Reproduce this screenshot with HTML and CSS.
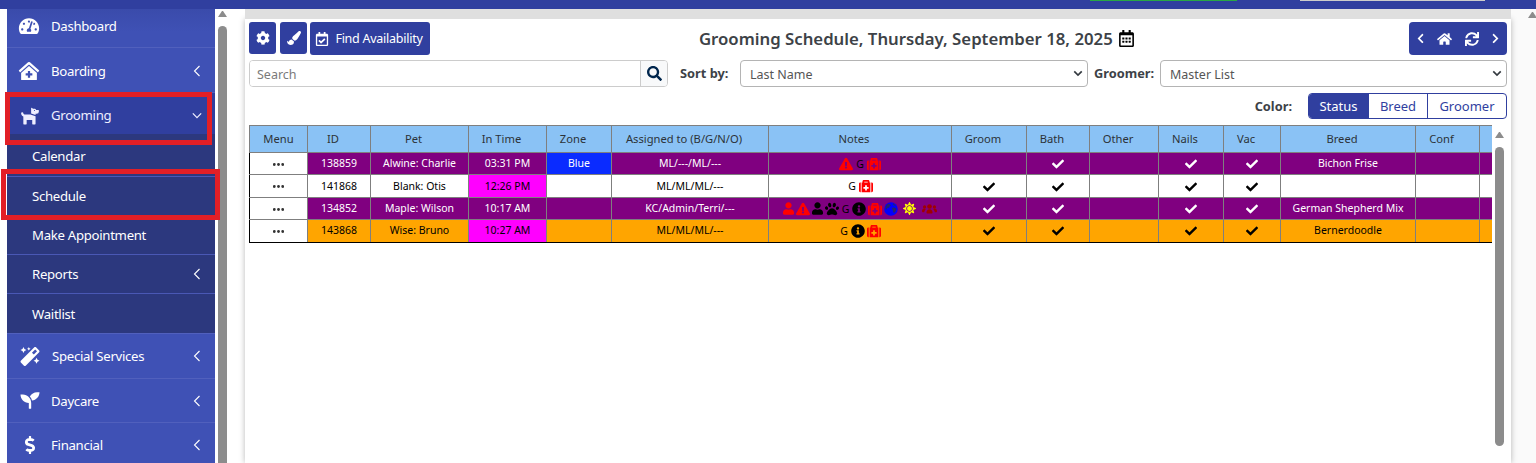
FILE: index.html
```html
<!DOCTYPE html>
<html lang="en">
<head>
<meta charset="utf-8">
<title>Grooming Schedule</title>
<link rel="stylesheet" href="styles.css">
</head>
<body>
<svg class="sprite" aria-hidden="true">
<symbol id="i-check" viewBox="0 0 512 512"><path d="M173.898 439.404l-166.4-166.4c-9.997-9.997-9.997-26.206 0-36.204l36.203-36.204c9.997-9.998 26.207-9.998 36.204 0L192 312.69 432.095 72.596c9.997-9.997 26.207-9.997 36.204 0l36.203 36.204c9.997 9.997 9.997 26.206 0 36.204l-294.4 294.401c-9.998 9.997-26.207 9.997-36.204-.001z"/></symbol>
<symbol id="i-search" viewBox="0 0 512 512"><path d="M505 442.7L405.3 343c-4.5-4.5-10.6-7-17-7H372c27.6-35.3 44-79.7 44-128C416 93.1 322.9 0 208 0S0 93.1 0 208s93.1 208 208 208c48.3 0 92.7-16.4 128-44v16.3c0 6.4 2.5 12.5 7 17l99.7 99.7c9.4 9.4 24.6 9.4 33.9 0l28.3-28.3c9.4-9.4 9.4-24.6.1-34zM208 336c-70.7 0-128-57.2-128-128 0-70.7 57.2-128 128-128 70.7 0 128 57.2 128 128 0 70.7-57.2 128-128 128z"/></symbol>
<symbol id="i-warn" viewBox="0 0 576 512"><path d="M569.517 440.013C587.975 472.007 564.806 512 527.94 512H48.054c-36.937 0-59.999-40.055-41.577-71.987L246.423 23.985c18.467-32.009 64.72-31.951 83.154 0l239.94 416.028zM288 354c-25.405 0-46 20.595-46 46s20.595 46 46 46 46-20.595 46-46-20.595-46-46-46zm-43.673-165.346l7.418 136c.347 6.364 5.609 11.346 11.982 11.346h48.546c6.373 0 11.635-4.982 11.982-11.346l7.418-136c.375-6.874-5.098-12.654-11.982-12.654h-63.383c-6.884 0-12.356 5.78-11.981 12.654z"/></symbol>
<symbol id="i-info" viewBox="0 0 512 512"><path d="M256 8C119.043 8 8 119.083 8 256c0 136.997 111.043 248 248 248s248-111.003 248-248C504 119.083 392.957 8 256 8zm0 110c23.196 0 42 18.804 42 42s-18.804 42-42 42-42-18.804-42-42 18.804-42 42-42zm56 254c0 6.627-5.373 12-12 12h-88c-6.627 0-12-5.373-12-12v-24c0-6.627 5.373-12 12-12h12v-64h-12c-6.627 0-12-5.373-12-12v-24c0-6.627 5.373-12 12-12h64c6.627 0 12 5.373 12 12v100h12c6.627 0 12 5.373 12 12v24z"/></symbol>
<symbol id="i-med" viewBox="0 0 512 512"><path d="M96 480h320V128h-32V80c0-26.51-21.49-48-48-48H176c-26.51 0-48 21.49-48 48v48H96v352zm96-384h128v32H192V96zm160 248c0 4.422-3.578 8-8 8h-56v56c0 4.422-3.578 8-8 8h-48c-4.422 0-8-3.578-8-8v-56h-56c-4.422 0-8-3.578-8-8v-48c0-4.422 3.578-8 8-8h56v-56c0-4.422 3.578-8 8-8h48c4.422 0 8 3.578 8 8v56h56c4.422 0 8 3.578 8 8v48zm160-168v256c0 26.51-21.49 48-48 48h-16V128h16c26.51 0 48 21.49 48 48zM64 480H48c-26.51 0-48-21.49-48-48V176c0-26.51 21.49-48 48-48h16v352z"/></symbol>
<symbol id="i-user" viewBox="0 0 448 512"><path d="M224 256c70.7 0 128-57.3 128-128S294.7 0 224 0 96 57.3 96 128s57.3 128 128 128zm89.6 32h-16.7c-22.2 10.2-46.9 16-72.9 16s-50.6-5.8-72.9-16h-16.7C60.2 288 0 348.2 0 422.4V464c0 26.5 21.5 48 48 48h352c26.5 0 48-21.5 48-48v-41.6c0-74.2-60.2-134.4-134.4-134.4z"/></symbol>
<symbol id="i-paw" viewBox="0 0 512 512"><path d="M256 224c-79.41 0-192 122.76-192 200.25 0 34.9 26.81 55.75 71.74 55.75 48.84 0 81.09-25.08 120.26-25.08 39.51 0 71.85 25.08 120.26 25.08 44.93 0 71.74-20.85 71.74-55.75C448 346.76 335.41 224 256 224zm-147.28-12.61c-10.4-34.65-42.44-57.09-71.56-50.13-29.12 6.96-44.29 40.69-33.89 75.34 10.4 34.65 42.44 57.09 71.56 50.13 29.12-6.96 44.29-40.69 33.89-75.34zm84.72-20.78c30.94-8.14 46.42-49.94 34.58-93.36s-46.52-72.01-77.46-63.87-46.42 49.94-34.58 93.36c11.84 43.42 46.52 72.02 77.46 63.87zm281.39-29.34c-29.12-6.96-61.15 15.48-71.56 50.13-10.4 34.65 4.77 68.38 33.89 75.34 29.12 6.96 61.15-15.48 71.56-50.13 10.4-34.65-4.77-68.38-33.89-75.34zm-156.27 29.34c30.94 8.14 65.62-20.45 77.46-63.87 11.84-43.42-3.64-85.21-34.58-93.36s-65.62 20.45-77.46 63.87c-11.84 43.42 3.64 85.22 34.58 93.36z"/></symbol>
<symbol id="i-sun" viewBox="0 0 512 512"><path d="M256 160c-52.9 0-96 43.1-96 96s43.1 96 96 96 96-43.1 96-96-43.1-96-96-96zm246.4 80.5l-94.7-47.3 33.5-100.4c4.5-13.6-8.4-26.5-21.9-21.9l-100.4 33.5-47.4-94.8c-6.4-12.8-24.6-12.8-31 0l-47.3 94.7L92.7 70.8c-13.6-4.5-26.5 8.4-21.9 21.9l33.5 100.4-94.7 47.4c-12.8 6.4-12.8 24.6 0 31l94.7 47.3-33.5 100.5c-4.5 13.6 8.4 26.5 21.9 21.9l100.4-33.5 47.3 94.7c6.4 12.8 24.6 12.8 31 0l47.3-94.7 100.4 33.5c13.6 4.5 26.5-8.4 21.9-21.9l-33.5-100.4 94.7-47.3c13-6.5 13-24.7.2-31.1zm-155.9 106c-49.9 49.9-131.1 49.9-181 0-49.9-49.9-49.9-131.1 0-181 49.9-49.9 131.1-49.9 181 0 49.9 49.9 49.9 131.1 0 181z"/></symbol>
<symbol id="i-globe" viewBox="0 0 512 512"><circle cx="256" cy="256" r="248" fill="#0000ff"/><path fill="#24246e" d="M150 60l70 20 30 50-50 30-20 50-60 10-30 60-40-40 10-80 50-70zM300 210l90-10 60 50-20 80-60 70-40-30-10-80-30-40zM340 50l70 50 20 50-60-20-50-50z"/></symbol>
<symbol id="i-users" viewBox="0 0 640 512"><circle cx="320" cy="170" r="100"/><circle cx="110" cy="190" r="70"/><circle cx="530" cy="190" r="70"/><path d="M190 440c0-90 50-150 130-150s130 60 130 150c0 20-15 30-30 30H220c-15 0-30-10-30-30zM0 360c0-60 40-100 90-100 30 0 55 10 70 30-40 35-60 80-65 130H40c-25 0-40-20-40-60zM640 360c0-60-40-100-90-100-30 0-55 10-70 30 40 35 60 80 65 130h55c25 0 40-20 40-60z"/></symbol>
<symbol id="i-dots" viewBox="0 0 512 512"><circle cx="60" cy="256" r="66"/><circle cx="256" cy="256" r="66"/><circle cx="452" cy="256" r="66"/></symbol>
<symbol id="i-cog" viewBox="0 0 512 512"><path d="M487.4 315.7l-42.6-24.6c4.3-23.2 4.3-47 0-70.2l42.6-24.6c4.9-2.8 7.1-8.6 5.5-14-11.1-35.6-30-67.8-54.7-94.6-3.8-4.1-10-5.1-14.8-2.3L380.8 110c-17.9-15.4-38.5-27.3-60.8-35.1V25.8c0-5.6-3.9-10.5-9.4-11.7-36.7-8.2-74.3-7.8-109.2 0-5.5 1.2-9.4 6.1-9.4 11.7V75c-22.2 7.9-42.8 19.8-60.8 35.1L88.7 85.5c-4.9-2.8-11-1.9-14.8 2.3-24.7 26.7-43.6 58.9-54.7 94.6-1.7 5.4.6 11.2 5.5 14L67.3 221c-4.3 23.2-4.3 47 0 70.2l-42.6 24.6c-4.9 2.8-7.1 8.6-5.5 14 11.1 35.6 30 67.8 54.7 94.6 3.8 4.1 10 5.1 14.8 2.3l42.6-24.6c17.9 15.4 38.5 27.3 60.8 35.1v49.2c0 5.6 3.9 10.5 9.4 11.7 36.7 8.2 74.3 7.8 109.2 0 5.5-1.2 9.4-6.1 9.4-11.7v-49.2c22.2-7.9 42.8-19.8 60.8-35.1l42.6 24.6c4.9 2.8 11 1.9 14.8-2.3 24.7-26.7 43.6-58.9 54.7-94.6 1.5-5.5-.7-11.3-5.6-14.1zM256 336c-44.1 0-80-35.9-80-80s35.9-80 80-80 80 35.9 80 80-35.9 80-80 80z"/></symbol>
<symbol id="i-brush" viewBox="0 0 512 512"><path d="M167.02 309.34c-40.12 2.58-76.53 17.86-97.19 72.3-2.35 6.21-8 9.98-14.59 9.98-11.11 0-45.46-27.67-55.25-34.35C0 439.62 37.93 512 128 512c75.86 0 128-43.77 128-120.19 0-3.11-.65-6.08-.97-9.13l-88.01-73.34zM457.89 0c-15.16 0-29.37 6.71-40.21 16.45C213.27 199.05 192 203.34 192 257.09c0 13.7 3.25 26.76 8.73 38.7l63.82 53.18c7.21 1.8 14.64 3.03 22.39 3.03 62.11 0 98.11-45.47 211.16-256.46 7.38-14.35 13.9-29.85 13.9-45.99C512 20.64 486 0 457.89 0z"/></symbol>
<symbol id="i-calcheck" viewBox="0 0 448 512"><path d="M400 64h-48V12c0-6.6-5.4-12-12-12h-40c-6.6 0-12 5.4-12 12v52H160V12c0-6.6-5.4-12-12-12h-40c-6.6 0-12 5.4-12 12v52H48C21.5 64 0 85.5 0 112v352c0 26.5 21.5 48 48 48h352c26.5 0 48-21.5 48-48V112c0-26.5-21.5-48-48-48zm-6 400H54c-3.3 0-6-2.7-6-6V160h352v298c0 3.3-2.7 6-6 6zm-52.2-200.6l-28.2-28.5c-4.7-4.7-12.3-4.7-17-.1L190 339.4l-46.3-46.7c-4.7-4.7-12.3-4.7-17-.1l-28.4 28.2c-4.7 4.7-4.7 12.3-.1 17l83 83.7c4.7 4.7 12.3 4.7 17 .1l143.6-141.3c4.7-4.6 4.7-12.2 0-16.9z"/></symbol>
<symbol id="i-cal" viewBox="0 0 448 512"><path d="M148 288h-40c-6.6 0-12-5.4-12-12v-40c0-6.6 5.4-12 12-12h40c6.6 0 12 5.4 12 12v40c0 6.6-5.4 12-12 12zm108-12v-40c0-6.6-5.4-12-12-12h-40c-6.6 0-12 5.4-12 12v40c0 6.6 5.4 12 12 12h40c6.6 0 12-5.4 12-12zm96 0v-40c0-6.6-5.4-12-12-12h-40c-6.6 0-12 5.4-12 12v40c0 6.6 5.4 12 12 12h40c6.6 0 12-5.4 12-12zm-96 96v-40c0-6.6-5.4-12-12-12h-40c-6.6 0-12 5.4-12 12v40c0 6.6 5.4 12 12 12h40c6.6 0 12-5.4 12-12zm-96 0v-40c0-6.6-5.4-12-12-12h-40c-6.6 0-12 5.4-12 12v40c0 6.6 5.4 12 12 12h40c6.6 0 12-5.4 12-12zm192 0v-40c0-6.6-5.4-12-12-12h-40c-6.6 0-12 5.4-12 12v40c0 6.6 5.4 12 12 12h40c6.6 0 12-5.4 12-12zm96-260v352c0 26.5-21.5 48-48 48H48c-26.5 0-48-21.5-48-48V112c0-26.5 21.5-48 48-48h48V12c0-6.6 5.4-12 12-12h40c6.6 0 12 5.4 12 12v52h128V12c0-6.6 5.4-12 12-12h40c6.6 0 12 5.4 12 12v52h48c26.5 0 48 21.5 48 48zm-48 346V160H48v298c0 3.3 2.7 6 6 6h340c3.3 0 6-2.7 6-6z"/></symbol>
<symbol id="i-left" viewBox="0 0 320 512"><path d="M34.52 239.03L228.87 44.69c9.37-9.37 24.57-9.37 33.94 0l22.67 22.67c9.36 9.36 9.37 24.52.04 33.9L131.49 256l154.02 154.75c9.34 9.38 9.32 24.54-.04 33.9l-22.67 22.67c-9.37 9.37-24.57 9.37-33.94 0L34.52 272.97c-9.37-9.37-9.37-24.57 0-33.94z"/></symbol>
<symbol id="i-right" viewBox="0 0 320 512"><path d="M285.476 272.971L91.132 467.314c-9.373 9.373-24.569 9.373-33.941 0l-22.667-22.667c-9.357-9.357-9.375-24.522-.04-33.901L188.505 256 34.484 101.255c-9.335-9.379-9.317-24.544.04-33.901l22.667-22.667c9.373-9.373 24.569-9.373 33.941 0L285.475 239.03c9.373 9.372 9.373 24.568.001 33.941z"/></symbol>
<symbol id="i-home" viewBox="0 0 576 512"><path d="M280.37 148.26L96 300.11V464a16 16 0 0 0 16 16l112.06-.29a16 16 0 0 0 15.92-16V368a16 16 0 0 1 16-16h64a16 16 0 0 1 16 16v95.64a16 16 0 0 0 16 16.05L464 480a16 16 0 0 0 16-16V300L295.67 148.26a12.19 12.19 0 0 0-15.3 0zM571.6 251.47L488 182.56V44.05a12 12 0 0 0-12-12h-56a12 12 0 0 0-12 12v72.61L318.47 43a48 48 0 0 0-61 0L4.34 251.47a12 12 0 0 0-1.6 16.9l25.5 31A12 12 0 0 0 45.15 301l235.22-193.74a12.19 12.19 0 0 1 15.3 0L530.9 301a12 12 0 0 0 16.9-1.6l25.5-31a12 12 0 0 0-1.7-16.93z"/></symbol>
<symbol id="i-sync" viewBox="0 0 512 512"><path d="M440.65 12.57l4 82.77A247.16 247.16 0 0 0 255.83 8C134.73 8 33.91 94.92 12.29 209.82A12 12 0 0 0 24.09 224h49.05a12 12 0 0 0 11.67-9.26 175.91 175.91 0 0 1 317-56.94l-101.46-4.86a12 12 0 0 0-12.57 12v47.41a12 12 0 0 0 12 12H500a12 12 0 0 0 12-12V12a12 12 0 0 0-12-12h-47.37a12 12 0 0 0-11.98 12.57zM255.83 432a175.61 175.61 0 0 1-146-77.8l101.8 4.87a12 12 0 0 0 12.57-12v-47.4a12 12 0 0 0-12-12H12a12 12 0 0 0-12 12V500a12 12 0 0 0 12 12h47.35a12 12 0 0 0 12-12.6l-4.15-82.57A247.17 247.17 0 0 0 255.83 504c121.11 0 221.93-86.92 243.55-201.82a12 12 0 0 0-11.8-14.18h-49.05a12 12 0 0 0-11.67 9.26A175.86 175.86 0 0 1 255.83 432z"/></symbol>
<symbol id="i-gauge" viewBox="0 0 576 512"><path d="M288 32C128.94 32 0 160.94 0 320c0 52.8 14.25 102.26 39.06 144.8 5.61 9.62 16.3 15.2 27.44 15.2h443c11.14 0 21.83-5.58 27.44-15.2C561.75 422.26 576 372.8 576 320c0-159.06-128.94-288-288-288zm0 64c14.71 0 26.58 10.13 30.32 23.65-1.11 2.26-2.64 4.23-3.45 6.67l-9.22 27.67c-5.13 3.49-10.97 6.01-17.64 6.01-17.67 0-32-14.33-32-32S270.33 96 288 96zM96 384c-17.67 0-32-14.33-32-32s14.33-32 32-32 32 14.33 32 32-14.33 32-32 32zm48-160c-17.67 0-32-14.33-32-32s14.33-32 32-32 32 14.33 32 32-14.33 32-32 32zm246.77-72.41l-61.33 184C343.13 347.33 352 364.54 352 384c0 11.72-3.38 22.55-8.88 32H232.88c-5.5-9.45-8.88-20.28-8.88-32 0-33.94 26.5-61.43 59.9-63.59l61.34-184.01c4.17-12.56 17.73-19.45 30.36-15.17 12.57 4.19 19.35 17.79 15.17 30.36zm14.66 57.2l15.52-46.55c3.47-1.29 7.13-2.23 11.05-2.23 17.67 0 32 14.33 32 32s-14.33 32-32 32c-11.38-.01-20.89-6.28-26.57-15.22zM480 384c-17.67 0-32-14.33-32-32s14.33-32 32-32 32 14.33 32 32-14.33 32-32 32z"/></symbol>
<symbol id="i-clinic" viewBox="0 0 576 512"><path d="M288 115L69.47 307.71c-1.62 1.46-3.69 2.14-5.47 3.35V496a16 16 0 0 0 16 16h416a16 16 0 0 0 16-16V311.1c-1.7-1.16-3.72-1.82-5.26-3.2zm96 261a8 8 0 0 1-8 8h-56v56a8 8 0 0 1-8 8h-48a8 8 0 0 1-8-8v-56h-56a8 8 0 0 1-8-8v-48a8 8 0 0 1 8-8h56v-56a8 8 0 0 1 8-8h48a8 8 0 0 1 8 8v56h56a8 8 0 0 1 8 8zm186.69-139.72l-255.94-226a39.85 39.85 0 0 0-53.45 0l-256 226a16 16 0 0 0-1.21 22.6L25.5 282.7a16 16 0 0 0 22.6 1.21L277.42 81.63a16 16 0 0 1 21.17 0L527.91 283.9a16 16 0 0 0 22.6-1.21l21.4-23.82a16 16 0 0 0-1.22-22.59z"/></symbol>
<symbol id="i-dog" viewBox="0 0 576 512"><path d="M298.06,224,448,277.55V496a16,16,0,0,1-16,16H368a16,16,0,0,1-16-16V384H192V496a16,16,0,0,1-16,16H112a16,16,0,0,1-16-16V282.09C58.84,268.84,32,233.66,32,192a32,32,0,0,1,64,0,32.06,32.06,0,0,0,32,32ZM544,112v32a64,64,0,0,1-64,64H448v35.58L320,197.87V48c0-14.25,17.22-21.39,27.31-11.31L374.59,64h53.63c10.91,0,23.75,7.92,28.62,17.69L464,96h64A16,16,0,0,1,544,112Zm-112,0a16,16,0,1,0-16,16A16,16,0,0,0,432,112Z"/></symbol>
<symbol id="i-magic" viewBox="0 0 512 512"><path d="M224 96l16-32 32-16-32-16-16-32-16 32-32 16 32 16 16 32zM80 160l26.66-53.33L160 80l-53.34-26.67L80 0 53.34 53.33 0 80l53.34 26.67L80 160zm352 128l-26.66 53.33L352 368l53.34 26.67L432 448l26.66-53.33L512 368l-53.34-26.67L432 288zm70.62-193.77L417.77 9.38C411.53 3.12 403.34 0 395.15 0c-8.19 0-16.38 3.12-22.63 9.38L9.38 372.52c-12.5 12.5-12.5 32.76 0 45.25l84.85 84.85c6.25 6.25 14.44 9.37 22.62 9.37 8.19 0 16.38-3.12 22.63-9.37l363.14-363.15c12.5-12.48 12.5-32.75 0-45.24zM359.45 203.46l-50.91-50.91 86.6-86.6 50.91 50.91-86.6 86.6z"/></symbol>
<symbol id="i-seed" viewBox="0 0 512 512"><path d="M64 96H0c0 123.7 100.3 224 224 224v144c0 8.8 7.2 16 16 16h32c8.8 0 16-7.2 16-16V320C288 196.3 187.7 96 64 96zm384-64c-84.2 0-157.4 46.5-195.7 115.2 27.7 30.2 48.2 66.9 59 107.6C424 243.1 512 147.9 512 32h-64z"/></symbol>
<symbol id="i-dollar" viewBox="0 0 288 512"><path d="M209.2 233.4l-108-31.6C88.7 198.2 80 186.5 80 173.5c0-16.3 13.2-29.5 29.5-29.5h66.3c12.2 0 24.2 3.7 34.2 10.5 6.1 4.1 14.3 3.1 19.5-2l34.8-34c7.1-6.9 6.1-18.4-1.8-24.5C238 74.8 207.4 64.1 176 64V16c0-8.8-7.2-16-16-16h-32c-8.8 0-16 7.2-16 16v48h-2.5C45.8 64-5.4 118.7.5 183.6c4.2 46.1 39.4 83.6 83.8 96.6l102.5 30c12.5 3.7 21.2 15.3 21.2 28.3 0 16.3-13.2 29.5-29.5 29.5h-66.3C100 368 88 364.3 78 357.5c-6.1-4.1-14.3-3.1-19.5 2l-34.8 34c-7.1 6.9-6.1 18.4 1.8 24.5 24.5 19.2 55.1 29.9 86.5 30v48c0 8.8 7.2 16 16 16h32c8.8 0 16-7.2 16-16v-48.2c46.6-.9 90.3-28.6 105.7-72.7 21.5-61.6-14.6-124.8-72.5-141.7z"/></symbol>
<symbol id="i-thinleft" viewBox="0 0 8 12"><path d="M6.5 1 1.5 6l5 5" fill="none" stroke="currentColor" stroke-width="1.1"/></symbol>
<symbol id="i-thindown" viewBox="0 0 12 8"><path d="M1 1.5 6 6.5l5-5" fill="none" stroke="currentColor" stroke-width="1.5"/></symbol>
</svg>

<header class="topbar">
  <span class="top-green"></span>
  <span class="top-field"></span>
</header>

<div class="shell">
  <nav class="sidebar">
    <a class="item first"><svg class="ico gauge"><use href="#i-gauge"/></svg><span>Dashboard</span></a>
    <a class="item nudge"><svg class="ico gauge"><use href="#i-clinic"/></svg><span>Boarding</span><svg class="chev"><use href="#i-thinleft"/></svg></a>
    <a class="item active"><svg class="ico dog"><use href="#i-dog"/></svg><span>Grooming</span><svg class="chev-d"><use href="#i-thindown"/></svg></a>
    <div class="sub">
      <a class="subitem">Calendar</a>
      <a class="subitem">Schedule</a>
      <a class="subitem">Make Appointment</a>
      <a class="subitem">Reports<svg class="chev"><use href="#i-thinleft"/></svg></a>
      <a class="subitem">Waitlist</a>
    </div>
    <a class="item"><svg class="ico magic"><use href="#i-magic"/></svg><span>Special Services</span><svg class="chev"><use href="#i-thinleft"/></svg></a>
    <a class="item"><svg class="ico seed"><use href="#i-seed"/></svg><span>Daycare</span><svg class="chev"><use href="#i-thinleft"/></svg></a>
    <a class="item"><svg class="ico dollar"><use href="#i-dollar"/></svg><span>Financial</span><svg class="chev"><use href="#i-thinleft"/></svg></a>
  </nav>

  <div class="vbar page"><span class="arrow"></span><span class="thumb"></span></div>

  <main class="card">
    <div class="row-top">
      <div class="btns">
        <button class="btn sq"><svg class="bi"><use href="#i-cog"/></svg></button>
        <button class="btn sq"><svg class="bi"><use href="#i-brush"/></svg></button>
        <button class="btn wide"><svg class="bi"><use href="#i-calcheck"/></svg>Find Availability</button>
      </div>
      <h1 class="title">Grooming Schedule, Thursday, September 18, 2025 <svg class="title-cal"><use href="#i-cal"/></svg></h1>
      <div class="navgroup">
        <svg class="n-chev"><use href="#i-left"/></svg>
        <svg class="n-home"><use href="#i-home"/></svg>
        <svg class="n-sync"><use href="#i-sync"/></svg>
        <svg class="n-chev"><use href="#i-right"/></svg>
      </div>
    </div>

    <div class="row-filter">
      <div class="search">
        <input class="search-input" type="text" placeholder="Search">
        <span class="search-btn"><svg class="search-ico"><use href="#i-search"/></svg></span>
      </div>
      <label class="lbl sort-lbl">Sort by:</label>
      <select class="sel sort-sel"><option>Last Name</option></select>
      <label class="lbl groomer-lbl">Groomer:</label>
      <select class="sel groomer-sel"><option>Master List</option></select>
    </div>

    <div class="row-color">
      <span class="lbl color-lbl">Color:</span>
      <div class="seg">
        <span class="seg-b on st">Status</span>
        <span class="seg-b br">Breed</span>
        <span class="seg-b gr">Groomer</span>
      </div>
    </div>

    <div class="grid-row">
      <div class="table-wrap">
        <table class="sched">
          <colgroup>
            <col class="c1"><col class="c2"><col class="c3"><col class="c4"><col class="c5"><col class="c6"><col class="c7"><col class="c8"><col class="c9"><col class="c10"><col class="c11"><col class="c12"><col class="c13"><col class="c14"><col class="c15">
          </colgroup>
          <thead>
            <tr><th>Menu</th><th>ID</th><th>Pet</th><th>In Time</th><th>Zone</th><th>Assigned to (B/G/N/O)</th><th>Notes</th><th>Groom</th><th>Bath</th><th>Other</th><th>Nails</th><th>Vac</th><th>Breed</th><th>Conf</th><th></th></tr>
          </thead>
          <tbody>
            <tr class="purple">
              <td class="menu"><svg class="dots"><use href="#i-dots"/></svg></td><td>138859</td><td>Alwine: Charlie</td><td>03:31 PM</td><td class="blue">Blue</td><td>ML/---/ML/---</td>
              <td><span class="notes"><svg class="n n-w red"><use href="#i-warn"/></svg><span class="g">G</span><svg class="n red"><use href="#i-med"/></svg></span></td>
              <td></td><td><svg class="ck"><use href="#i-check"/></svg></td><td></td><td><svg class="ck"><use href="#i-check"/></svg></td><td><svg class="ck"><use href="#i-check"/></svg></td><td>Bichon Frise</td><td></td><td></td>
            </tr>
            <tr>
              <td class="menu"><svg class="dots"><use href="#i-dots"/></svg></td><td>141868</td><td>Blank: Otis</td><td class="mag">12:26 PM</td><td></td><td>ML/ML/ML/---</td>
              <td><span class="notes"><span class="g">G</span><svg class="n red"><use href="#i-med"/></svg></span></td>
              <td><svg class="ck"><use href="#i-check"/></svg></td><td><svg class="ck"><use href="#i-check"/></svg></td><td></td><td><svg class="ck"><use href="#i-check"/></svg></td><td><svg class="ck"><use href="#i-check"/></svg></td><td></td><td></td><td></td>
            </tr>
            <tr class="purple">
              <td class="menu"><svg class="dots"><use href="#i-dots"/></svg></td><td>134852</td><td>Maple: Wilson</td><td>10:17 AM</td><td></td><td>KC/Admin/Terri/---</td>
              <td><span class="notes"><svg class="n n-u red"><use href="#i-user"/></svg><svg class="n n-w red"><use href="#i-warn"/></svg><svg class="n n-u blk"><use href="#i-user"/></svg><svg class="n blk"><use href="#i-paw"/></svg><span class="g">G</span><svg class="n blk"><use href="#i-info"/></svg><svg class="n red"><use href="#i-med"/></svg><svg class="n"><use href="#i-globe"/></svg><svg class="n n-s yel"><use href="#i-sun"/></svg><svg class="n n-g drk"><use href="#i-users"/></svg></span></td>
              <td><svg class="ck"><use href="#i-check"/></svg></td><td><svg class="ck"><use href="#i-check"/></svg></td><td></td><td><svg class="ck"><use href="#i-check"/></svg></td><td><svg class="ck"><use href="#i-check"/></svg></td><td>German Shepherd Mix</td><td></td><td></td>
            </tr>
            <tr class="orange">
              <td class="menu"><svg class="dots"><use href="#i-dots"/></svg></td><td>143868</td><td>Wise: Bruno</td><td class="mag">10:27 AM</td><td></td><td>ML/ML/ML/---</td>
              <td><span class="notes"><span class="g">G</span><svg class="n blk"><use href="#i-info"/></svg><svg class="n red"><use href="#i-med"/></svg></span></td>
              <td><svg class="ck"><use href="#i-check"/></svg></td><td><svg class="ck"><use href="#i-check"/></svg></td><td></td><td><svg class="ck"><use href="#i-check"/></svg></td><td><svg class="ck"><use href="#i-check"/></svg></td><td>Bernerdoodle</td><td></td><td></td>
            </tr>
          </tbody>
        </table>
      </div>
      <div class="vbar inner"><span class="arrow"></span><span class="thumb"></span></div>
    </div>
  </main>

  <div class="edge"><span class="arrow"></span></div>
</div>

<div class="mark mark-a"></div>
<div class="mark mark-b"></div>
</body>
</html>
```
FILE: styles.css
```css
* { box-sizing: border-box; }
html, body { margin: 0; height: 463px; overflow: hidden; background: #fff; }
body { font-family: "Noto Sans", "Open Sans", sans-serif; color: #212529; position: relative; }
.sprite { display: none; }
svg { fill: currentColor; }

.topbar { height: 9px; background: #303f9f; display: flex; align-items: flex-start; padding-left: 1090px; }
.top-green { width: 147px; height: 1px; background: #28a745; }
.top-field { width: 185px; height: 1px; margin-left: 63px; background: #ccc; }

.shell { display: flex; height: 454px; padding-left: 7px; }

.sidebar { width: 208px; height: 454px; overflow: hidden; flex: none; background: #3f51b5; color: #fff; font-size: 13.2px; letter-spacing: -.3px; }
.item { display: flex; align-items: center; height: 44.5px; padding-left: 11px; border-bottom: 1px solid #5160bd; background: #3f51b5; }
.item.first { height: 39px; padding-bottom: 5px; background: linear-gradient(#3a4bab, #3f51b5 60%); }
.item.nudge { padding-top: 2px; }
.item.active { padding-top: 4px; background: #303f9f; border-bottom: 3px solid #2c387e; color: #eef; }
.ico { flex: none; width: 22px; height: 18px; margin-right: 11px; }
.ico.dog { height: 19px; width: 20px; margin-left: 2px; }
.ico.magic { height: 19px; width: 20px; margin-left: 2px; margin-right: 12px; }
.ico.seed { height: 19px; width: 20px; margin-left: 2px; margin-right: 11px; }
.ico.dollar { height: 18px; margin-left: 1px; margin-right: 10px; }
.chev { width: 8px; height: 12px; margin-left: auto; margin-right: 14px; }
.chev-d { width: 10px; height: 7px; margin-left: auto; margin-right: 13px; }

.sub { background: #2c387e; border-bottom: 1px solid #5160bd; padding: .4px 0 .1px; }
.subitem { display: flex; align-items: center; height: 39.2px; padding-left: 25px; border-bottom: 1px solid #4a58b5; }
.subitem:last-child { border-bottom: 0; }

.vbar { position: relative; flex: none; width: 9px; }
.vbar.page { margin-left: 3px; height: 454px; }
.arrow { display: block; width: 9px; height: 6px; border-left: 4.5px solid transparent; border-right: 4.5px solid transparent; border-bottom: 6px solid #8c8c8c; }
.vbar.page .arrow { margin-top: 2px; }
.thumb { display: block; width: 9px; background: #8c8c8c; border-radius: 5px; }
.vbar.page .thumb { height: 460px; margin-top: 9px; }
.vbar.inner { margin-left: 3px; }
.vbar.inner .arrow { margin-top: 7px; }
.vbar.inner .thumb { height: 299px; margin-top: 9px; }

.card { position: relative; flex: none; width: 1266px; height: 444px; margin: 10px 0 0 18px; padding: 3px 4px 0; background: #fff; box-shadow: 0 -10px 0 #dfdfdf, 0 0 6px rgba(0,0,0,.28); }

.row-top { display: flex; align-items: flex-start; height: 33px; }
.btns { display: flex; gap: 4px; flex: none; }
.btn { display: flex; align-items: center; justify-content: center; height: 32px; border: 0; padding: 0; border-radius: 3px; background: #303f9f; color: #fff; font: 12.5px "Noto Sans", sans-serif; letter-spacing: -.25px; }
.btn.sq { width: 27px; }
.btn.wide { width: 120px; height: 33px; margin-left: -1px; gap: 6px; padding-right: 2px; }
.bi { width: 14px; height: 14px; }
.title { flex: 1; margin: 8px 6px 0 0; text-align: center; font-size: 16.75px; font-weight: 600; line-height: 16px; color: #3d4247; white-space: nowrap; }
.title-cal { width: 15px; height: 17px; margin-left: 2px; color: #000; vertical-align: -2px; }
.navgroup { display: flex; align-items: center; justify-content: space-between; width: 98px; height: 33px; padding: 0 8px; background: #303f9f; border-radius: 4px; color: #fff; flex: none; }
.n-chev { width: 7px; height: 11px; }
.n-home { width: 15px; height: 14px; }
.n-sync { width: 14px; height: 14px; }

.row-filter { display: flex; align-items: center; margin-top: 4px; height: 28px; }
.search { display: flex; width: 419px; height: 27px; border: 1px solid #ccc; border-radius: 4px; overflow: hidden; flex: none; }
.search-input { flex: 1; min-width: 0; border: 0; padding: 2px 7px 0; outline: 0; font: 12.5px "Noto Sans", sans-serif; color: #555; }
.search-input::placeholder { color: #7a7a7a; opacity: 1; }
.search-btn { display: flex; align-items: center; justify-content: center; width: 27px; border-left: 1px solid #ccc; background: #f8f9fa; color: #00264d; }
.search-ico { width: 15px; height: 15px; }
.lbl { font-size: 12.8px; font-weight: 700; color: #3d4247; white-space: nowrap; }
.sort-lbl { margin-left: 12px; width: 60px; }
.sel { appearance: none; height: 27px; border: 1px solid #b4b4b4; border-radius: 4px; padding: 2px 9px 0; font: 12.5px "Noto Sans", sans-serif; color: #555; background: #fff url("data:image/svg+xml,%3Csvg xmlns='http://www.w3.org/2000/svg' viewBox='0 0 12 8'%3E%3Cpath d='M1.5 1.5 6 6l4.5-4.5' fill='none' stroke='%23343a40' stroke-width='2'/%3E%3C/svg%3E") no-repeat right 4px center / 10px 7px; }
.sort-sel { width: 348px; }
.groomer-lbl { margin-left: 6px; width: 66px; }
.groomer-sel { width: 347px; }

.row-color { display: flex; justify-content: flex-end; align-items: center; margin-top: 6px; height: 26px; }
.color-lbl { margin-right: 16px; }
.seg { display: flex; height: 26px; width: 199px; border: 1px solid #303f9f; border-radius: 4px; overflow: hidden; font-size: 13px; color: #303f9f; }
.seg-b { display: flex; align-items: center; justify-content: center; border-right: 1px solid #303f9f; }
.seg-b.st { width: 60px; }
.seg-b.br { width: 59px; }
.seg-b.gr { flex: 1; border-right: 0; }
.seg-b.on { background: #303f9f; color: #fff; }

.grid-row { display: flex; margin-top: 6px; }
.table-wrap { width: 1243px; overflow: hidden; flex: none; }
.sched { width: 1243px; table-layout: fixed; border-collapse: collapse; font-size: 10.5px; color: #000; }
.c1 { width: 58px; } .c2 { width: 63px; } .c3 { width: 98px; } .c4 { width: 78px; } .c5 { width: 65px; }
.c6 { width: 157px; } .c7 { width: 183px; } .c8 { width: 75px; } .c9 { width: 63px; } .c10 { width: 69px; }
.c11 { width: 65px; } .c12 { width: 57px; } .c13 { width: 135px; } .c14 { width: 64px; } .c15 { width: 13px; }
.sched th { height: 27px; padding: 0 12px 1px 0; background: #8ac2f5; border: 1px solid #7f7f7f; font-size: 11.2px; font-weight: 400; color: #2c3238; white-space: nowrap; }
.sched th:first-child { padding-right: 0; }
.sched td { height: 22.4px; padding: 0 0 1px; text-align: center; border-left: 1px solid #7f7f7f; border-right: 1px solid #7f7f7f; border-bottom: 1px solid #7f7f7f; white-space: nowrap; }
.sched tbody tr:last-child td { border-bottom: 1.5px solid #000; }
.sched td:first-child { border-left: 1px solid #000; }
.purple td { background: #800080; color: #fff; }
.orange td { background: #ffa500; }
.sched td.menu { background: #fff; color: #333; }
.sched td.mag { background: #f0f; color: #000; }
.sched td.blue { background: #0a2bff; color: #fff; }
.dots { width: 11px; height: 11px; vertical-align: middle; }
.ck { width: 12px; height: 12px; vertical-align: middle; }
.notes { display: inline-flex; align-items: center; justify-content: center; gap: 2px; vertical-align: middle; }
.n { width: 14px; height: 14px; }
.n-w { width: 14px; }
.n-u { width: 11px; height: 13px; }
.n-s { width: 13px; height: 13px; margin-left: 3px; }
.n-g { width: 15px; height: 13px; margin-left: 4px; }
.g { color: #000; font-size: 10.5px; margin: 0 1px; }
.red { color: #ff0000; }
.blk { color: #000; }
.yel { color: #ffff00; }
.drk { color: #a00000; }

.edge { flex: 1; display: flex; justify-content: flex-end; overflow: hidden; background: #fafafa; }
.edge .arrow { margin-top: 3px; margin-right: -1px; }

.mark { position: absolute; border: 5px solid #e21f26; }
.mark-a { left: 5px; top: 92px; width: 207px; height: 53px; }
.mark-b { left: 1px; top: 169px; width: 219px; height: 51px; }
```
